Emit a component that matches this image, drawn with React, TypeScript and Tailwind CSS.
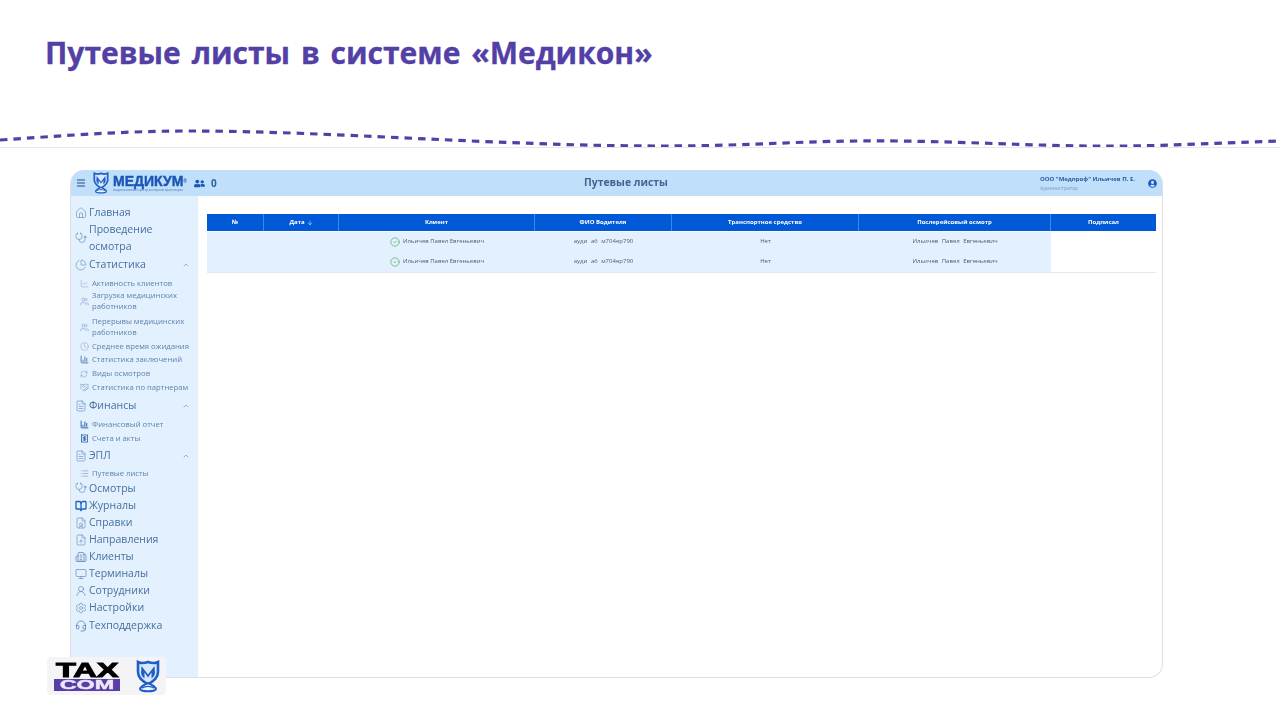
import {
  Home,
  Stethoscope,
  ChartPie,
  ChevronUp,
  ChartLine,
  Users,
  Clock,
  FileText,
  RefreshCw,
  Handshake,
  ChartColumn,
  Receipt,
  List,
  BookOpen,
  FileUser,
  FileUp,
  Building2,
  Monitor,
  UserRound,
  Settings,
  Headset,
  CircleCheck,
  ArrowDown,
} from "lucide-react";
import { FaUserCircle, FaUserFriends } from "react-icons/fa";
import type { ReactNode } from "react";

function Shield({ className }: { className: string }) {
  return (
    <svg viewBox="0 0 24 33" className={className} fill="none">
      <path d="M2 2 C5 3.5 8 3.5 12 2 C16 3.5 19 3.5 22 2 V12 C22 18 17 21 12 24.5 C7 21 2 18 2 12 Z" fill="#d9e8fb" stroke="#1d5fc4" strokeWidth="2.6" />
      <path d="M5.5 6 L12 14.5 L18.5 6 L19 13 C18.5 15.5 17.5 17 15.5 18.5 L15.5 12.5 L12 17.5 L8.5 12.5 V18.5 C6.5 17 5.5 15.5 5 13 Z" fill="#1d5fc4" />
      <path d="M12 23 C8 25 3.5 26.5 4 29 C4.5 32 19.5 32 20 29 C20.5 26.5 16 25 12 23 Z" fill="#eef4fc" stroke="#1d5fc4" strokeWidth="2" />
      <path d="M5.5 28 C9.5 26 14.5 26 18.5 28" stroke="#1d5fc4" strokeWidth="1.4" />
    </svg>
  );
}

function MainRow({ icon, children, chevron }: { icon: ReactNode; children: ReactNode; chevron?: boolean }) {
  return (
    <div className="flex h-[17px] items-center pl-[4px] pr-[8px] text-[10.5px] text-[#47709f]">
      <span className="mr-[2px] flex w-[12px] shrink-0 justify-center text-[#5f87b5]">{icon}</span>
      <span className="whitespace-nowrap">{children}</span>
      {chevron && <ChevronUp size={8} strokeWidth={2} className="ml-auto text-[#6f8fb3]" />}
    </div>
  );
}

function SubRow({ icon, children, tall }: { icon: ReactNode; children: ReactNode; tall?: boolean }) {
  return (
    <div className={`flex items-center pl-[8px] text-[7.7px] leading-[11px] text-[#5f83ad] ${tall ? "h-[22px]" : "h-[13.8px]"}`}>
      <span className="mr-[3px] flex w-[10px] shrink-0 justify-center text-[#7b9bc0]">{icon}</span>
      <span className="whitespace-pre-line">{children}</span>
    </div>
  );
}

function Sidebar() {
  return (
    <aside className="w-[127px] shrink-0 bg-[#e3f0fe] pt-2">
      <MainRow icon={<Home size={12} strokeWidth={1.2} />}>Главная</MainRow>
      <div className="flex h-[33px] items-center pl-[4px] text-[10.5px] leading-[16.5px] text-[#47709f]">
        <span className="mr-[2px] flex w-[12px] shrink-0 justify-center text-[#5f87b5]">
          <Stethoscope size={12} strokeWidth={1.2} />
        </span>
        <span>
          Проведение
          <br />
          осмотра
        </span>
      </div>
      <div className="mt-[2px]">
        <MainRow chevron icon={<ChartPie size={12} strokeWidth={1.2} />}>Статистика</MainRow>
      </div>
      <div className="mt-[3.5px]">
        <SubRow icon={<ChartLine size={9} strokeWidth={1.2} />}>Активность клиентов</SubRow>
        <SubRow tall icon={<Users size={9} strokeWidth={1.5} />}>{"Загрузка медицинских\nработников"}</SubRow>
        <div className="mt-[4px]">
          <SubRow tall icon={<Users size={9} strokeWidth={1.5} />}>{"Перерывы медицинских\nработников"}</SubRow>
        </div>
        <div className="mt-[1px]">
          <SubRow icon={<Clock size={9} strokeWidth={1.2} />}>Среднее время ожидания</SubRow>
          <SubRow icon={<ChartColumn size={9} strokeWidth={2.2} className="text-[#3f6fa8]" />}>Статистика заключений</SubRow>
          <SubRow icon={<RefreshCw size={8} strokeWidth={1.5} />}>Виды осмотров</SubRow>
          <SubRow icon={<Handshake size={9} strokeWidth={1.5} />}>Статистика по партнерам</SubRow>
        </div>
      </div>
      <div className="mt-[3px]">
        <MainRow chevron icon={<FileText size={12} strokeWidth={1.2} />}>Финансы</MainRow>
      </div>
      <div className="mt-[3px]">
        <SubRow icon={<ChartColumn size={9} strokeWidth={2.6} className="text-[#2a62a8]" />}>Финансовый отчет</SubRow>
        <SubRow icon={<Receipt size={9} strokeWidth={2.2} className="text-[#2a62a8]" />}>Счета и акты</SubRow>
      </div>
      <div className="mt-[2px]">
        <MainRow chevron icon={<FileText size={12} strokeWidth={1.2} />}>ЭПЛ</MainRow>
      </div>
      <div className="mt-[3px]">
        <SubRow icon={<List size={9} strokeWidth={1.8} />}>Путевые листы</SubRow>
      </div>
      <div className="-mt-[1px] flex flex-col gap-[0.15px]">
        <MainRow icon={<Stethoscope size={12} strokeWidth={1.2} />}>Осмотры</MainRow>
        <MainRow icon={<BookOpen size={12} strokeWidth={2.6} className="text-[#1d5fc4]" />}>Журналы</MainRow>
        <MainRow icon={<FileUser size={12} strokeWidth={1.2} />}>Справки</MainRow>
        <MainRow icon={<FileUp size={12} strokeWidth={1.2} />}>Направления</MainRow>
        <MainRow icon={<Building2 size={12} strokeWidth={1.5} />}>Клиенты</MainRow>
        <MainRow icon={<Monitor size={12} strokeWidth={1.3} />}>Терминалы</MainRow>
        <MainRow icon={<UserRound size={12} strokeWidth={1.3} />}>Сотрудники</MainRow>
        <MainRow icon={<Settings size={12} strokeWidth={1.2} />}>Настройки</MainRow>
        <MainRow icon={<Headset size={12} strokeWidth={1.6} />}>Техподдержка</MainRow>
      </div>
    </aside>
  );
}

const headers = [
  { label: "№", w: "w-[57px]" },
  { label: "Дата", w: "w-[75px]", arrow: true },
  { label: "Клиент", w: "w-[196px]" },
  { label: "ФИО Водителя", w: "w-[137px]" },
  { label: "Транспортное средство", w: "w-[187px]" },
  { label: "Послерейсовый осмотр", w: "w-[192px]" },
  { label: "Подписал", w: "w-[105px]" },
];

function Row() {
  return (
    <div className="flex h-[20px] items-center text-[6px] text-[#4f5d6e]">
      <div className="flex h-full w-[844px] items-center bg-[#e3f0fe]">
        <div className="w-[132px]" />
        <div className="flex w-[196px] items-center justify-center gap-[3px]">
          <CircleCheck size={10} strokeWidth={1.6} className="text-[#4ca85a]" />
          <span>Ильичев Павел Евгеньевич</span>
        </div>
        <div className="w-[137px] text-center [word-spacing:2px]">ауди а6 м704ер790</div>
        <div className="w-[187px] text-center">Нет</div>
        <div className="w-[192px] text-center [word-spacing:2px]">Ильичев Павел Евгеньевич</div>
      </div>
    </div>
  );
}

export default function App() {
  return (
    <div className="relative h-[720px] w-[1280px] overflow-hidden bg-white font-['Open_Sans',sans-serif]">
      <div className="flex h-[148px] flex-col border-b border-[#e8e8e8]">
        <h1 className="mt-[32px] pl-[45px] text-[30px] font-bold leading-[42px] text-[#5340a6] [-webkit-text-stroke:0.3px_#5340a6] [word-spacing:3px]">
          Путевые листы в системе «Медикон»
        </h1>
        <svg viewBox="0 0 1280 30" className="mt-[43px] h-[30px] w-[1280px] shrink-0" fill="none">
          <path
            d="M0 23 C60 19 120 14 190 14 C330 14 500 29 660 29 C760 29 800 23 900 24 C980 25 1050 30 1130 29 C1190 28 1240 25 1280 24"
            stroke="#5340a6"
            strokeWidth="3.2"
            strokeDasharray="7.5 6"
          />
        </svg>
      </div>

      <div className="ml-[70px] mt-[22px] flex h-[508px] w-[1093px] flex-col overflow-hidden rounded-[14px] border border-t-0 border-[#dcdfe3] blur-[0.3px]">
        <header className="relative flex h-[26px] shrink-0 items-center bg-[#bfdffb] text-[#1d5fc4]">
          <span className="ml-[6px] flex w-[8px] flex-col gap-[1.5px]">
            <span className="h-[1.5px] bg-[#6f96c0]" />
            <span className="h-[1.5px] bg-[#6f96c0]" />
            <span className="h-[1.5px] bg-[#6f96c0]" />
          </span>
          <Shield className="ml-[8px] h-[22px] w-[16px]" />
          <div className="ml-[4px] flex flex-col">
            <span className="font-['Liberation_Sans',sans-serif] text-[14px] font-bold leading-[13px] text-[#1b55b5] [-webkit-text-stroke:0.4px_#1b55b5]">
              МЕДИКУМ<sup className="text-[5px] [-webkit-text-stroke:0]">®</sup>
            </span>
            <span className="whitespace-nowrap text-[3.3px] leading-[4px] text-[#3f6fb0]">национальный центр контроля транспорта</span>
          </div>
          <FaUserFriends size={11} className="ml-[7px] text-[#1b55b5]" />
          <span className="ml-[6px] text-[10px] font-bold text-[#2c5f9f]">0</span>
          <span className="absolute left-[513px] text-[10.4px] font-bold text-[#44648f]">Путевые листы</span>
          <div className="ml-auto mr-[27px] flex flex-col">
            <span className="whitespace-nowrap text-[6px] font-bold leading-[9px] text-[#2c5aa0]">ООО "Медпроф" Ильичев П. Е.</span>
            <span className="text-[5px] leading-[8px] text-[#7d9ec4]">Администратор</span>
          </div>
          <FaUserCircle size={9} className="absolute right-[5px] text-[#1b55b5]" />
        </header>
        <div className="flex min-h-0 flex-1">
          <Sidebar />
          <main className="flex-1 pl-[9px] pt-[18px]">
            <div className="flex h-[17px] w-[949px] bg-[#0059d6] text-[6px] font-bold text-white">
              {headers.map((h) => (
                <div key={h.label} className={`flex items-center justify-center gap-[2px] border-r border-[#3f86e6] last:border-r-0 ${h.w}`}>
                  {h.label}
                  {h.arrow && <ArrowDown size={6} strokeWidth={2} />}
                </div>
              ))}
            </div>
            <div className="w-[949px] border-b border-[#e3e9f0] pt-[0.5px]">
              <Row />
              <Row />
            </div>
          </main>
        </div>
      </div>

      <div className="absolute left-[47px] top-[657px] flex h-[38px] w-[119px] items-center rounded-[4px] bg-[#f4f4f7]">
        <div className="ml-[7px] flex w-[66px] flex-col items-stretch">
          <span className="flex h-[16px] items-center justify-center font-['Liberation_Sans',sans-serif] text-[21px] font-bold leading-none text-black [-webkit-text-stroke:1px_black]">
            <span className="inline-block scale-x-[1.55]">TAX</span>
          </span>
          <span className="mt-[1px] flex h-[12px] items-center justify-center bg-[#5a3ea8] font-['Liberation_Sans',sans-serif] text-[12px] font-bold leading-none text-[#ece8f8] [-webkit-text-stroke:0.4px_#ece8f8]">
            <span className="inline-block scale-x-[1.95]">COM</span>
          </span>
        </div>
        <Shield className="ml-[16px] h-[33px] w-[24px]" />
      </div>
    </div>
  );
}
